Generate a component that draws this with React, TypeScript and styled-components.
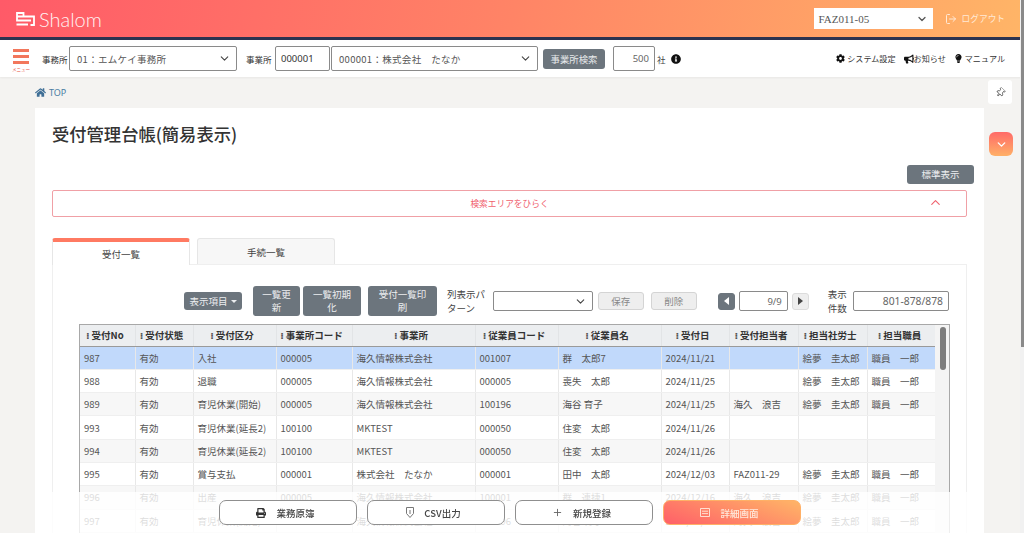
import React from "react";
import styled, { createGlobalStyle } from "styled-components";
import { ChevronDown, ChevronUp, LogOut, Plus } from "lucide-react";
import { FaBullhorn, FaCog, FaHome, FaInfoCircle, FaLightbulb, FaPrint, FaThumbtack } from "react-icons/fa";

const GlobalStyle = createGlobalStyle`
    html, body {
        margin: 0;
        padding: 0;
        height: 533px;
        overflow: hidden;
        background: #f4f3f1;
        font-family: "Noto Sans CJK JP", "Noto Sans", sans-serif;
        color: #333;
    }
    * { box-sizing: border-box; }
`;

const columns = [
    { title: "受付No", width: 55 },
    { title: "受付状態", width: 58 },
    { title: "受付区分", width: 83 },
    { title: "事業所コード", width: 76 },
    { title: "事業所", width: 123 },
    { title: "従業員コード", width: 83 },
    { title: "従業員名", width: 103 },
    { title: "受付日", width: 68 },
    { title: "受付担当者", width: 69 },
    { title: "担当社労士", width: 69 },
    { title: "担当職員", width: 70 },
];

const rows = [
    ["987", "有効", "入社", "000005", "海久情報株式会社", "001007", "群　太郎7", "2024/11/21", "", "絵夢　圭太郎", "職員　一郎"],
    ["988", "有効", "退職", "000005", "海久情報株式会社", "000005", "喪失　太郎", "2024/11/25", "", "絵夢　圭太郎", "職員　一郎"],
    ["989", "有効", "育児休業(開始)", "000005", "海久情報株式会社", "100196", "海谷 育子", "2024/11/25", "海久　浪吉", "絵夢　圭太郎", "職員　一郎"],
    ["993", "有効", "育児休業(延長2)", "100100", "MKTEST", "000050", "住変　太郎", "2024/11/26", "", "", ""],
    ["994", "有効", "育児休業(延長2)", "100100", "MKTEST", "000050", "住変　太郎", "2024/11/26", "", "", ""],
    ["995", "有効", "賞与支払", "000001", "株式会社　たなか", "000001", "田中　太郎", "2024/12/03", "FAZ011-29", "絵夢　圭太郎", "職員　一郎"],
    ["996", "有効", "出産", "000005", "海久情報株式会社", "100001", "群　連捷1", "2024/12/16", "海久　浪吉", "絵夢　圭太郎", "職員　一郎"],
    ["997", "有効", "育児休業(開始)", "000005", "海久情報株式会社", "100196", "海谷 育子", "2024/12/16", "海久　浪吉", "絵夢　圭太郎", "職員　一郎"],
];

const LogoMark = () => (
    <svg width="19" height="14" viewBox="0 0 19 14" fill="none" stroke="#fff" strokeWidth="1.8">
        <path d="M1 1h6.5v3.5H1zM1 4.5v4h10M0.5 12.5h11.5M7.5 4.5h10.5v8.5h-3.5M11 8.5h4" />
    </svg>
);

const CsvIcon = () => (
    <svg width="8" height="11" viewBox="0 0 8 11" fill="none" stroke="#777" strokeWidth="1">
        <path d="M0.5 0.5h7v6L4 10.5 0.5 6.5zM4 3v4" />
    </svg>
);

const DetailIcon = () => (
    <svg width="10" height="9" viewBox="0 0 10 9" fill="none" stroke="#ffeadd" strokeWidth="0.9">
        <path d="M0.5 0.5h9v8h-9zM2 3.2h6M2 5.6h6" />
    </svg>
);

const App = () => {
    return (
        <>
            <GlobalStyle />
            <Header>
                <Brand>
                    <LogoMark />
                    <BrandName>Shalom</BrandName>
                </Brand>
                <HeaderRight>
                    <UserSelect>
                        <span>FAZ011-05</span>
                        <ChevronDown size={12} color="#555" strokeWidth={2.5} />
                    </UserSelect>
                    <Logout>
                        <LogOut size={12} />
                        <span>ログアウト</span>
                    </Logout>
                </HeaderRight>
            </Header>
            <Toolbar>
                <MenuButton>
                    <MenuBar />
                    <MenuBar />
                    <MenuBar />
                    <MenuLabel>メニュー</MenuLabel>
                </MenuButton>
                <FieldLabel>事務所</FieldLabel>
                <SelectBox width={168}>
                    <span>01：エムケイ事務所</span>
                    <ChevronDown size={13} color="#444" />
                </SelectBox>
                <FieldLabel $left={9} $width={29}>事業所</FieldLabel>
                <InputBox width={55} $dark>000001</InputBox>
                <SelectBox width={207}>
                    <span>000001：株式会社　たなか</span>
                    <ChevronDown size={13} color="#444" />
                </SelectBox>
                <SearchButton>事業所検索</SearchButton>
                <InputBox width={42} $right $left={8}>500</InputBox>
                <Unit>社</Unit>
                <FaInfoCircle size={10} color="#111" />
                <ToolLinks>
                    <ToolLink><FaCog size={9} color="#111" />システム設定</ToolLink>
                    <ToolLink $tight><FaBullhorn size={10} color="#111" />お知らせ</ToolLink>
                    <ToolLink><FaLightbulb size={9} color="#111" />マニュアル</ToolLink>
                </ToolLinks>
            </Toolbar>
            <Breadcrumb>
                <FaHome size={11} color="#3f6f96" />
                <span>TOP</span>
            </Breadcrumb>
            <PinButton><PinGlyph><FaThumbtack size={9} color="#fff" stroke="#333" strokeWidth={40} /></PinGlyph></PinButton>
            <CollapseButton><ChevronDown size={13} color="#fff" strokeWidth={2.5} /></CollapseButton>
            <Card>
                <Title>受付管理台帳(簡易表示)</Title>
                <ViewRow>
                    <GrayButton $width={67} $height={19}>標準表示</GrayButton>
                </ViewRow>
                <SearchArea>
                    <span>検索エリアをひらく</span>
                    <SearchChevron><ChevronUp size={15} color="#f0616d" strokeWidth={1.8} /></SearchChevron>
                </SearchArea>
                <Tabs>
                    <Tab $active>受付一覧</Tab>
                    <Tab>手続一覧</Tab>
                </Tabs>
                <TabPanel>
                    <Controls>
                        <GrayButton $width={58} $height={18} $nowrap>表示項目<Caret /></GrayButton>
                        <GrayButton $width={47} $height={30} $left={11}>一覧更新</GrayButton>
                        <GrayButton $width={58} $height={30} $left={3}>一覧初期化</GrayButton>
                        <GrayButton $width={69} $height={30} $left={7}>受付一覧印刷</GrayButton>
                        <PatternLabel>列表示パターン</PatternLabel>
                        <SelectBox width={100} height={20}>
                            <span />
                            <ChevronDown size={13} color="#444" />
                        </SelectBox>
                        <LightButton $left={5}>保存</LightButton>
                        <LightButton $left={7}>削除</LightButton>
                        <PageButton $dark $left={21}><TriangleLeft /></PageButton>
                        <InputBox width={49} height={20} $right $left={4}>9/9</InputBox>
                        <PageButton $left={3}><TriangleRight /></PageButton>
                        <CountLabel>表示件数</CountLabel>
                        <InputBox width={96} height={20} $right $left={1} $size={10.3}>801-878/878</InputBox>
                    </Controls>
                    <TableFrame>
                        <Table>
                            <colgroup>
                                {columns.map((c) => <col key={c.title} style={{ width: c.width }} />)}
                            </colgroup>
                            <thead>
                                <tr>
                                    {columns.map((c) => (
                                        <HeadCell key={c.title}>
                                            <Grip>⁝</Grip>{c.title}
                                        </HeadCell>
                                    ))}
                                </tr>
                            </thead>
                            <tbody>
                                {rows.map((row, i) => (
                                    <Row key={row[0]} $selected={i === 0} $even={i % 2 === 0}>
                                        {row.map((cell, j) => <Cell key={j}>{cell}</Cell>)}
                                    </Row>
                                ))}
                            </tbody>
                        </Table>
                        <TableScroll><TableThumb /></TableScroll>
                    </TableFrame>
                </TabPanel>
            </Card>
            <Footer>
                <FooterButton><FaPrint size={10} color="#333" />業務原簿</FooterButton>
                <FooterButton><CsvIcon />CSV出力</FooterButton>
                <FooterButton><Plus size={11} color="#666" />新規登録</FooterButton>
                <FooterButton $primary><DetailIcon />詳細画面</FooterButton>
            </Footer>
            <PageScroll><PageThumb /></PageScroll>
        </>
    );
};

export default App;

const Header = styled.header`
    height: 40px;
    border-bottom: 3px solid #2b3350;
    background: linear-gradient(100deg, #ff5a68 0%, #ff8466 50%, #ffb567 100%);
    display: flex;
    align-items: center;
    justify-content: space-between;
    padding: 0 19px 0 16px;
`;

const Brand = styled.div`
    display: flex;
    align-items: center;
    gap: 4px;
`;

const BrandName = styled.span`
    color: #fff;
    font-family: "Lato", sans-serif;
    font-weight: 300;
    font-size: 20px;
    opacity: 0.92;
`;

const HeaderRight = styled.div`
    display: flex;
    align-items: center;
    gap: 12px;
`;

const UserSelect = styled.div`
    width: 119px;
    height: 21px;
    background: #fff;
    display: flex;
    align-items: center;
    justify-content: space-between;
    padding: 0 5px;
    font-family: "Liberation Serif", serif;
    font-size: 11px;
    color: #555;
`;

const Logout = styled.div`
    display: flex;
    align-items: center;
    gap: 5px;
    color: #ffe9d6;
    font-size: 8.7px;
`;

const Toolbar = styled.div`
    height: 37px;
    background: #fff;
    display: flex;
    align-items: center;
    padding: 0 19px 0 0;
    box-shadow: 0 1px 2px rgba(0, 0, 0, 0.05);
`;

const MenuButton = styled.div`
    width: 42px;
    flex: none;
    align-self: flex-start;
    margin-top: 9px;
    display: flex;
    flex-direction: column;
    align-items: center;
    gap: 3.5px;
`;

const MenuBar = styled.i`
    display: block;
    width: 16px;
    height: 2.5px;
    background: #f2775c;
`;

const MenuLabel = styled.span`
    font-size: 4.5px;
    color: #e8503f;
    line-height: 5px;
`;

const FieldLabel = styled.span<{ $left?: number; $width?: number }>`
    font-size: 8.5px;
    color: #333;
    margin-left: ${(p) => p.$left ?? 0}px;
    white-space: nowrap;
    width: ${(p) => p.$width ?? 27}px;
`;

const SelectBox = styled.div<{ width: number; height?: number }>`
    width: ${(p) => p.width}px;
    height: ${(p) => p.height ?? 25}px;
    flex: none;
    border: 1px solid #8a8a8a;
    border-radius: 2px;
    background: #fff;
    display: flex;
    align-items: center;
    justify-content: space-between;
    padding: 0 5px 0 7px;
    font-size: 9.5px;
    color: #555;
    letter-spacing: 0.3px;
    white-space: nowrap;
`;

const InputBox = styled.div<{ width: number; height?: number; $right?: boolean; $dark?: boolean; $left?: number; $size?: number }>`
    width: ${(p) => p.width}px;
    height: ${(p) => p.height ?? 25}px;
    flex: none;
    margin-left: ${(p) => p.$left ?? 0}px;
    margin-right: 1px;
    border: 1px solid #8a8a8a;
    border-radius: 2px;
    background: #fff;
    display: flex;
    align-items: center;
    justify-content: ${(p) => (p.$right ? "flex-end" : "flex-start")};
    padding: 0 5px;
    font-family: "Noto Sans", sans-serif;
    font-size: ${(p) => p.$size ?? 9.5}px;
    color: ${(p) => (p.$dark ? "#333" : "#666")};
`;

const SearchButton = styled.div`
    width: 62px;
    height: 20px;
    margin-left: 5px;
    background: #6c757d;
    border-radius: 3px;
    color: #e8eaec;
    font-size: 9.4px;
    display: flex;
    align-items: center;
    justify-content: center;
`;

const Unit = styled.span`
    font-size: 8.5px;
    margin: 0 5px 0 1px;
    color: #444;
`;

const ToolLinks = styled.div`
    margin-left: auto;
    display: flex;
    align-items: center;
    gap: 8px;
`;

const ToolLink = styled.div<{ $tight?: boolean }>`
    display: flex;
    align-items: center;
    gap: ${(p) => (p.$tight ? 0 : 2)}px;
    font-size: 8.1px;
    color: #333;
    white-space: nowrap;
`;

const Breadcrumb = styled.div`
    height: 30px;
    padding: 1px 0 0 35px;
    display: flex;
    align-items: center;
    gap: 3px;
    font-family: "Noto Sans", sans-serif;
    font-size: 9px;
    color: #4a7da3;
`;

const PinButton = styled.div`
    position: fixed;
    left: 988px;
    top: 80px;
    width: 24px;
    height: 24px;
    background: #fff;
    border-radius: 3px;
    display: flex;
    align-items: center;
    justify-content: center;
`;

const PinGlyph = styled.span`
    display: flex;
    transform: rotate(40deg);
`;

const CollapseButton = styled.div`
    position: fixed;
    left: 989px;
    top: 132px;
    width: 24px;
    height: 24px;
    border-radius: 6px;
    background: linear-gradient(180deg, #ff6a68, #ffb067);
    display: flex;
    align-items: center;
    justify-content: center;
`;

const Card = styled.main`
    width: 949px;
    margin: 1px 0 0 35px;
    padding: 13px 17px 0;
    background: #fff;
    height: 425px;
    overflow: hidden;
`;

const Title = styled.h1`
    margin: 0;
    font-size: 17.3px;
    line-height: 26px;
    font-weight: 500;
    color: #333;
`;

const ViewRow = styled.div`
    display: flex;
    justify-content: flex-end;
    margin: 18px -7px 6px 0;
`;

const GrayButton = styled.div<{ $width: number; $height: number; $left?: number; $nowrap?: boolean }>`
    width: ${(p) => p.$width}px;
    height: ${(p) => p.$height}px;
    margin-left: ${(p) => p.$left ?? 0}px;
    flex: none;
    background: #6c757d;
    border-radius: 3px;
    color: #eceef0;
    font-size: 9.5px;
    line-height: 13px;
    text-align: center;
    display: flex;
    align-items: center;
    justify-content: center;
    padding: 0 ${(p) => (p.$nowrap ? 0 : 6.5)}px;
    white-space: ${(p) => (p.$nowrap ? "nowrap" : "normal")};
`;

const Caret = styled.i`
    display: inline-block;
    flex: none;
    margin-left: 3px;
    border: 3px solid transparent;
    border-top-color: #eceef0;
    border-bottom: none;
`;

const SearchArea = styled.div`
    position: relative;
    height: 27px;
    width: 915px;
    border: 1px solid #f0a0a6;
    border-radius: 2px;
    color: #f0616d;
    font-size: 8.7px;
    display: flex;
    align-items: center;
    justify-content: center;
`;

const SearchChevron = styled.span`
    position: absolute;
    right: 23px;
    top: 4px;
    display: flex;
`;

const Tabs = styled.div`
    display: flex;
    gap: 7px;
    margin-top: 21px;
    height: 27px;
`;

const Tab = styled.div<{ $active?: boolean }>`
    width: 138px;
    height: ${(p) => (p.$active ? 27 : 26)}px;
    border: 1px solid #e6e6e6;
    border-bottom: none;
    border-top: ${(p) => (p.$active ? "4px solid #ff7a62" : "1px solid #e6e6e6")};
    border-radius: 3px 3px 0 0;
    background: ${(p) => (p.$active ? "#fff" : "#f7f7f7")};
    display: flex;
    align-items: center;
    justify-content: center;
    font-size: 9.5px;
    color: #444;
    position: relative;
    z-index: 1;
`;

const TabPanel = styled.div`
    margin-top: -1px;
    width: 915px;
    height: 300px;
    border: 1px solid #efefef;
    border-bottom: none;
    padding: 21px 16px 0 26px;
`;

const Controls = styled.div`
    display: flex;
    align-items: center;
    height: 30px;
    padding-left: 105px;
    margin-bottom: 8px;
`;

const PatternLabel = styled.div`
    width: 46px;
    margin: 0 3px 0 10px;
    font-size: 9.5px;
    line-height: 14px;
    color: #444;
`;

const CountLabel = styled.div`
    width: 26px;
    margin-left: 19px;
    font-size: 9.5px;
    line-height: 14px;
    color: #444;
`;

const LightButton = styled.div<{ $left?: number }>`
    width: 46px;
    height: 18px;
    margin-left: ${(p) => p.$left ?? 0}px;
    flex: none;
    border: 1px solid #d4d4d4;
    border-radius: 3px;
    background: #eeeeee;
    color: #888;
    font-size: 9.5px;
    display: flex;
    align-items: center;
    justify-content: center;
`;

const PageButton = styled.div<{ $dark?: boolean; $left?: number }>`
    width: 17px;
    height: 17px;
    margin-left: ${(p) => p.$left ?? 0}px;
    flex: none;
    border-radius: 3px;
    background: ${(p) => (p.$dark ? "#6c757d" : "#eeeeee")};
    border: 1px solid ${(p) => (p.$dark ? "#6c757d" : "#dcdcdc")};
    display: flex;
    align-items: center;
    justify-content: center;
`;

const TriangleLeft = styled.i`
    border: 4px solid transparent;
    border-right: 5px solid #fff;
    border-left: none;
`;

const TriangleRight = styled.i`
    border: 4px solid transparent;
    border-left: 5px solid #444;
    border-right: none;
`;

const TableFrame = styled.div`
    position: relative;
    width: 871px;
    border: 1px solid #a8a8a8;
    border-bottom: none;
    height: 230px;
    overflow: hidden;
`;

const Table = styled.table`
    width: 857px;
    table-layout: fixed;
    border-collapse: collapse;
    font-size: 9.5px;
`;

const HeadCell = styled.th`
    height: 21px;
    padding: 0 5px 0 0;
    background: #eceef0;
    border-right: 1px solid #e2e4e6;
    border-bottom: 1px solid #9a9a9a;
    font-size: 9.5px;
    font-weight: 700;
    color: #333;
    white-space: nowrap;
    text-align: center;
`;

const Grip = styled.span`
    color: #555;
    margin-right: 2px;
    font-family: "DejaVu Sans", sans-serif;
`;

const Row = styled.tr<{ $selected?: boolean; $even?: boolean }>`
    background: ${(p) => (p.$selected ? "#c1d9fb" : p.$even ? "#f7f7f7" : "#fff")};
`;

const Cell = styled.td`
    height: 23.3px;
    padding: 0 0 0 4px;
    border-right: 1px solid #e8e8e8;
    border-bottom: 1px solid #efefef;
    font-size: 9.5px;
    color: #555;
    white-space: nowrap;
    overflow: hidden;
`;

const TableScroll = styled.div`
    position: absolute;
    top: 0;
    right: 0;
    width: 14px;
    height: 100%;
    background: #f4f4f4;
`;

const TableThumb = styled.div`
    width: 6px;
    height: 43px;
    margin: 2px 0 0 5px;
    border-radius: 3px;
    background: #7d7d7d;
`;

const Footer = styled.footer`
    position: fixed;
    left: 35px;
    width: 949px;
    bottom: 0;
    height: 41px;
    padding: 8px 0 0 184px;
    background: rgba(255, 255, 255, 0.8);
    display: flex;
    gap: 10px;
    align-items: flex-start;
`;

const FooterButton = styled.div<{ $primary?: boolean }>`
    width: 138px;
    height: 25px;
    padding-right: 5px;
    border-radius: 7px;
    border: 1px solid ${(p) => (p.$primary ? "#ffb067" : "#8f8f8f")};
    background: ${(p) => (p.$primary ? "linear-gradient(20deg, #ff5f68, #ffb567)" : "#fff")};
    color: ${(p) => (p.$primary ? "#ffeadd" : "#444")};
    font-size: 9.5px;
    font-weight: 500;
    display: flex;
    align-items: center;
    justify-content: center;
    gap: 10px;
`;

const PageScroll = styled.div`
    position: fixed;
    top: 0;
    right: 0;
    width: 4px;
    height: 533px;
    background: #f1f1f1;
`;

const PageThumb = styled.div`
    width: 3px;
    margin-left: 1px;
    height: 347px;
    background: #8a8a8a;
`;
